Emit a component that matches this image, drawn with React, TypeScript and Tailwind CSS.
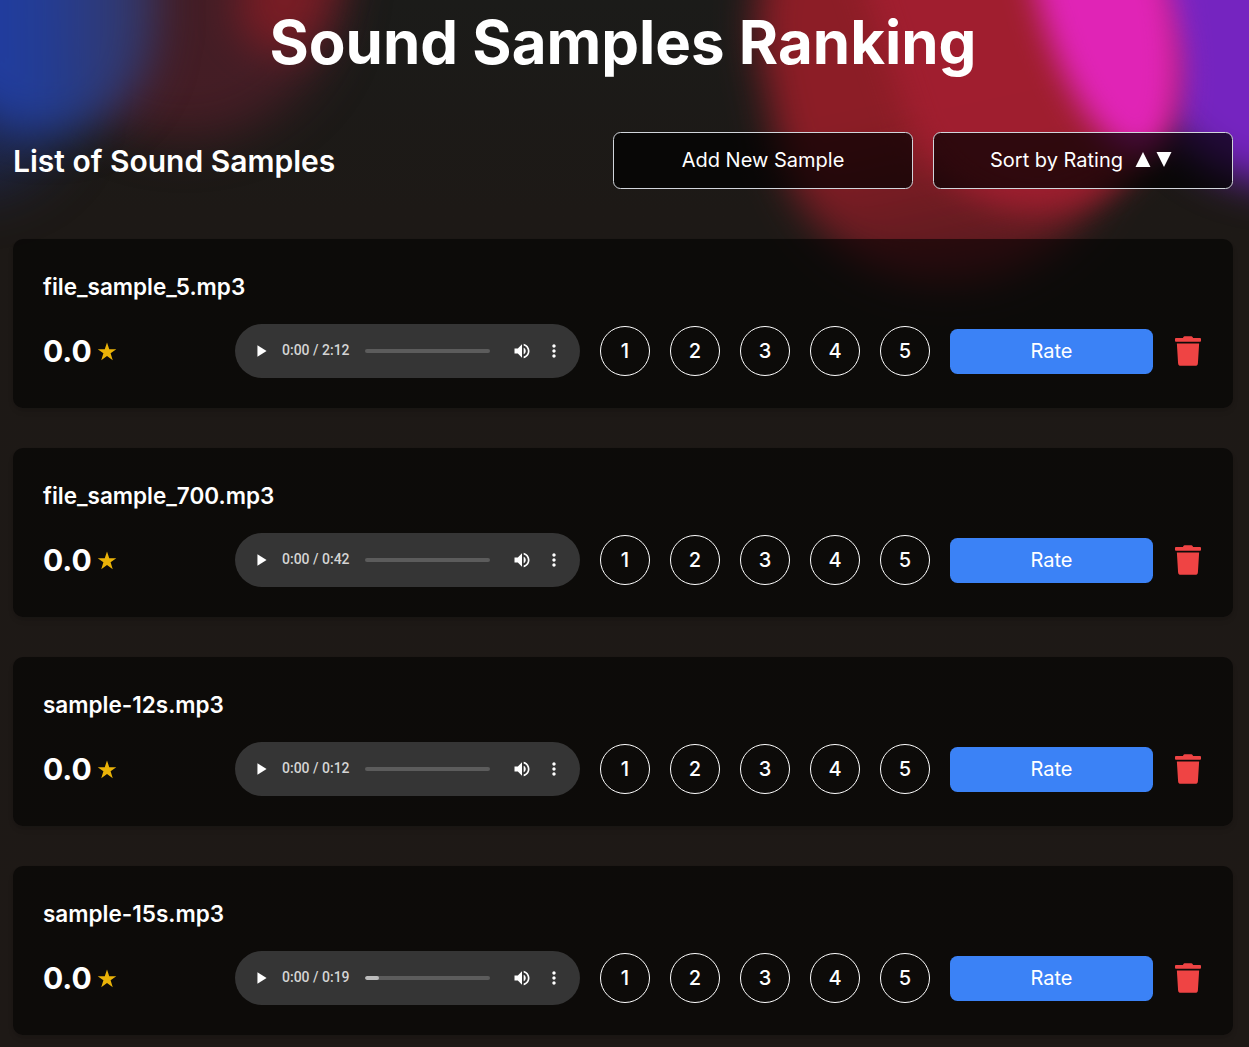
import React from "react";
import { FaTrash } from "react-icons/fa";

type Sample = { name: string; duration: string; buffered: number };

const samples: Sample[] = [
  { name: "file_sample_5.mp3", duration: "2:12", buffered: 0 },
  { name: "file_sample_700.mp3", duration: "0:42", buffered: 0 },
  { name: "sample-12s.mp3", duration: "0:12", buffered: 0 },
  { name: "sample-15s.mp3", duration: "0:19", buffered: 11 },
];

function Backdrop() {
  return (
    <div className="pointer-events-none absolute inset-0 overflow-hidden">
      <div className="absolute -top-[180px] left-[30px] h-[320px] w-[310px] rounded-full bg-[#6b2032]/50 blur-[24px]" />
      <div className="absolute -top-[110px] left-[250px] h-[165px] w-[90px] rotate-[20deg] rounded-full bg-[#8a1c24]/75 blur-[20px]" />
      <div className="absolute -top-[170px] -left-[120px] h-[360px] w-[190px] rounded-full bg-[#213b9c]/40 blur-[28px]" />
      <div className="absolute -top-[200px] -left-[60px] h-[335px] w-[215px] rounded-full bg-linear-to-r from-[#213d9f] from-30% to-[#2f437f]/70 blur-[22px]" />
      <div className="absolute -top-[150px] left-[766px] h-[435px] w-[345px] -rotate-[12deg] rounded-full bg-linear-to-b from-[#8c1d26] from-60% to-[#6b1b22]/70 blur-[19px]" />
      <div className="absolute -top-[160px] left-[1135px] h-[345px] w-[300px] rounded-full bg-[#7524c0] blur-[20px]" />
      <div className="absolute -top-[190px] left-[880px] h-[405px] w-[275px] -rotate-[18deg] rounded-full bg-[#a21e30]/90 blur-[15px]" />
      <div className="absolute -top-[190px] left-[1036px] h-[350px] w-[130px] -rotate-[15deg] rounded-[50%] bg-[#e024b6] blur-[15px]" />
    </div>
  );
}

function AudioPlayer({ duration, buffered }: { duration: string; buffered: number }) {
  return (
    <div className="flex h-[54px] w-[345px] shrink-0 items-center rounded-full bg-[#353535] text-white">
      <svg className="ml-[17px] size-5" viewBox="0 0 24 24" fill="currentColor">
        <path d="M6.5 5v14l11-7z" />
      </svg>
      <span className="ml-[10px] w-[83px] pb-0.5 font-[Roboto] text-[14px] font-medium whitespace-nowrap text-[#d4d4d4]">
        0:00 / {duration}
      </span>
      <div className="h-1 w-[125px] overflow-hidden rounded-full bg-[#5c5c5c]">
        <div className="h-full rounded-full bg-[#bcbcbc]" style={{ width: `${buffered}%` }} />
      </div>
      <svg className="ml-[22px] size-5" viewBox="0 0 24 24" fill="currentColor">
        <path d="M3 9v6h4l5 5V4L7 9H3zm13.5 3c0-1.77-1.02-3.29-2.5-4.03v8.05c1.48-.73 2.5-2.25 2.5-4.02zM14 3.23v2.06c2.89.86 5 3.54 5 6.71s-2.11 5.85-5 6.71v2.06c4.01-.91 7-4.49 7-8.77s-2.99-7.86-7-8.77z" />
      </svg>
      <svg className="ml-[12px] size-5" viewBox="0 0 24 24" fill="currentColor">
        <path d="M12 8c1.1 0 2-.9 2-2s-.9-2-2-2-2 .9-2 2 .9 2 2 2zm0 2c-1.1 0-2 .9-2 2s.9 2 2 2 2-.9 2-2-.9-2-2-2zm0 6c-1.1 0-2 .9-2 2s.9 2 2 2 2-.9 2-2-.9-2-2-2z" />
      </svg>
    </div>
  );
}

function SampleCard({ sample }: { sample: Sample }) {
  return (
    <li className="h-[169px] rounded-[10px] bg-[#020202]/60 px-[30px] pt-[30px] shadow-md">
      <h3 className="text-[22.5px] leading-[35px] font-semibold">{sample.name}</h3>
      <div className="mt-5 flex h-[54px] items-center">
        <div className="flex w-[192px] items-center">
          <span className="text-[30px] leading-none font-bold">0.0</span>
          <svg className="ml-[5px] h-[19px] w-5 text-[#eab308]" viewBox="0 0 20 19" fill="currentColor">
            <path d="M10 .4l2.25 6.75h7.05l-5.7 4.2 2.15 6.85L10 14l-5.75 4.2 2.15-6.85-5.7-4.2h7.05z" />
          </svg>
        </div>
        <AudioPlayer duration={sample.duration} buffered={sample.buffered} />
        <div className="ml-5 flex gap-5">
          {[1, 2, 3, 4, 5].map((n) => (
            <button
              key={n}
              className="flex size-[50px] items-center justify-center rounded-full border border-white text-[20px] font-medium"
            >
              {n}
            </button>
          ))}
        </div>
        <button className="ml-5 h-[45px] w-[203px] rounded-[7.5px] bg-[#3b82f6] text-[20px]">Rate</button>
        <button className="ml-[22px] text-[#ef4444]" aria-label="Delete">
          <FaTrash size={30} className="w-[26px]" />
        </button>
      </div>
    </li>
  );
}

export default function App() {
  return (
    <main className="relative h-[1047px] w-full overflow-hidden bg-linear-to-b from-[#1b1b19] via-[#1d1916] via-20% to-[#1e1916] font-[Inter,sans-serif] text-white">
      <Backdrop />
      <div className="relative pr-4 pl-[13px]">
        <h1 className="pt-[12px] text-center text-[60px] leading-[60px] font-bold">Sound Samples Ranking</h1>
        <header className="mt-[60px] flex h-[57px] items-center justify-between">
          <h2 className="text-[30px] leading-none font-semibold">List of Sound Samples</h2>
          <div className="flex gap-5 text-[20px]">
            <button className="h-[57px] w-[300px] rounded-[7.5px] border border-[#d1d5db] bg-black/70 pb-0.5">
              Add New Sample
            </button>
            <button className="flex h-[57px] w-[300px] items-center justify-center rounded-[7.5px] border border-[#d1d5db] bg-black/70 pr-[3px] pb-0.5">
              Sort by Rating
              <svg className="ml-3 h-[15px] w-[38px]" viewBox="0 0 38 15" fill="currentColor">
                <path d="M8 0L15.5 15H.5zM21.5 0h15L29 15z" />
              </svg>
            </button>
          </div>
        </header>
        <ul className="mt-[50px] flex flex-col gap-10">
          {samples.map((s) => (
            <SampleCard key={s.name} sample={s} />
          ))}
        </ul>
      </div>
    </main>
  );
}
